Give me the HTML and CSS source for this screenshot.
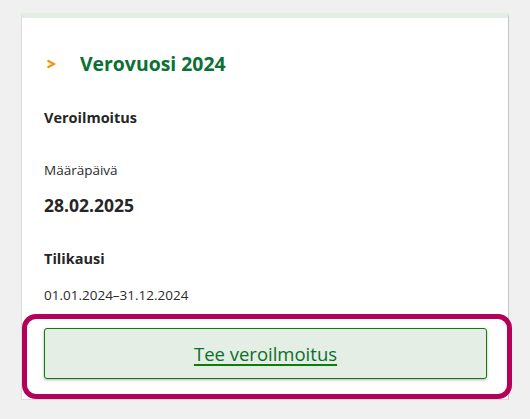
FILE: index.html
```html
<!DOCTYPE html>
<html lang="fi">
<head>
  <meta charset="utf-8">
  <title>Verovuosi 2024</title>
  <link rel="stylesheet" href="styles.css">
</head>
<body>
<div class="card">
  <div class="card-head">
    <svg class="chev" width="10" height="10" viewBox="0 0 10 10"><polyline points="1.5,1.5 8,5 1.5,8.5" fill="none" stroke="#f39200" stroke-width="2"/></svg>
    <h2 class="year">Verovuosi 2024</h2>
  </div>
  <h3 class="label">Veroilmoitus</h3>
  <div class="small">Määräpäivä</div>
  <div class="due">28.02.2025</div>
  <h3 class="label label-2">Tilikausi</h3>
  <div class="small period">01.01.2024–31.12.2024</div>
  <div class="focus-ring">
    <a class="btn" href="#">Tee veroilmoitus</a>
  </div>
</div>
</body>
</html>
```
FILE: styles.css
```css
html, body { margin: 0; padding: 0; }
body {
  background: #f0f0f0;
  font-family: "Open Sans", "Noto Sans", sans-serif;
  color: #262626;
  height: 419px;
}

.card {
  margin: 13px 0 0 21px;
  width: 486px;
  background: #fff;
  border-top: 5px solid #e4eee4;
  border-left: 1px solid #dcdcdc;
  border-right: 1px solid #c4c4c4;
  border-bottom: 1px solid #dcdcdc;
  padding: 0;
}

.card-head {
  display: flex;
  align-items: center;
  padding: 32px 0 0 24px;
}
.chev { display: block; margin-right: 24px; }
.year {
  margin: 0;
  font-size: 19.4px;
  line-height: 28px;
  font-weight: 700;
  color: #0b7033;
}

.label {
  margin: 30px 0 0 22px;
  font-size: 14.5px;
  line-height: 20px;
  font-weight: 700;
}
.label-2 { margin-top: 32px; }

.small {
  margin: 32px 0 0 22px;
  font-size: 13.5px;
  line-height: 20px;
  color: #2b2b2b;
}
.period { margin-top: 16px; }

.due {
  margin: 13px 0 0 22px;
  font-size: 17.5px;
  line-height: 24px;
  font-weight: 700;
}

.focus-ring {
  margin: 9px -4px 0 0;
  border: 5px solid #b5005a;
  border-radius: 14px;
  padding: 9px 20px 15px 17px;
}

.btn {
  display: block;
  height: 49px;
  line-height: 49px;
  text-align: center;
  background: #e4eee4;
  border: 1px solid #0a7d0a;
  border-radius: 3px;
  box-shadow: 0 1px 3px rgba(0,0,0,0.3);
  color: #0b6e2b;
  font-size: 18.5px;
  text-decoration: underline;
  text-decoration-color: #0a7d0a;
  text-decoration-thickness: 2px;
  text-underline-offset: 3px;
}
```
